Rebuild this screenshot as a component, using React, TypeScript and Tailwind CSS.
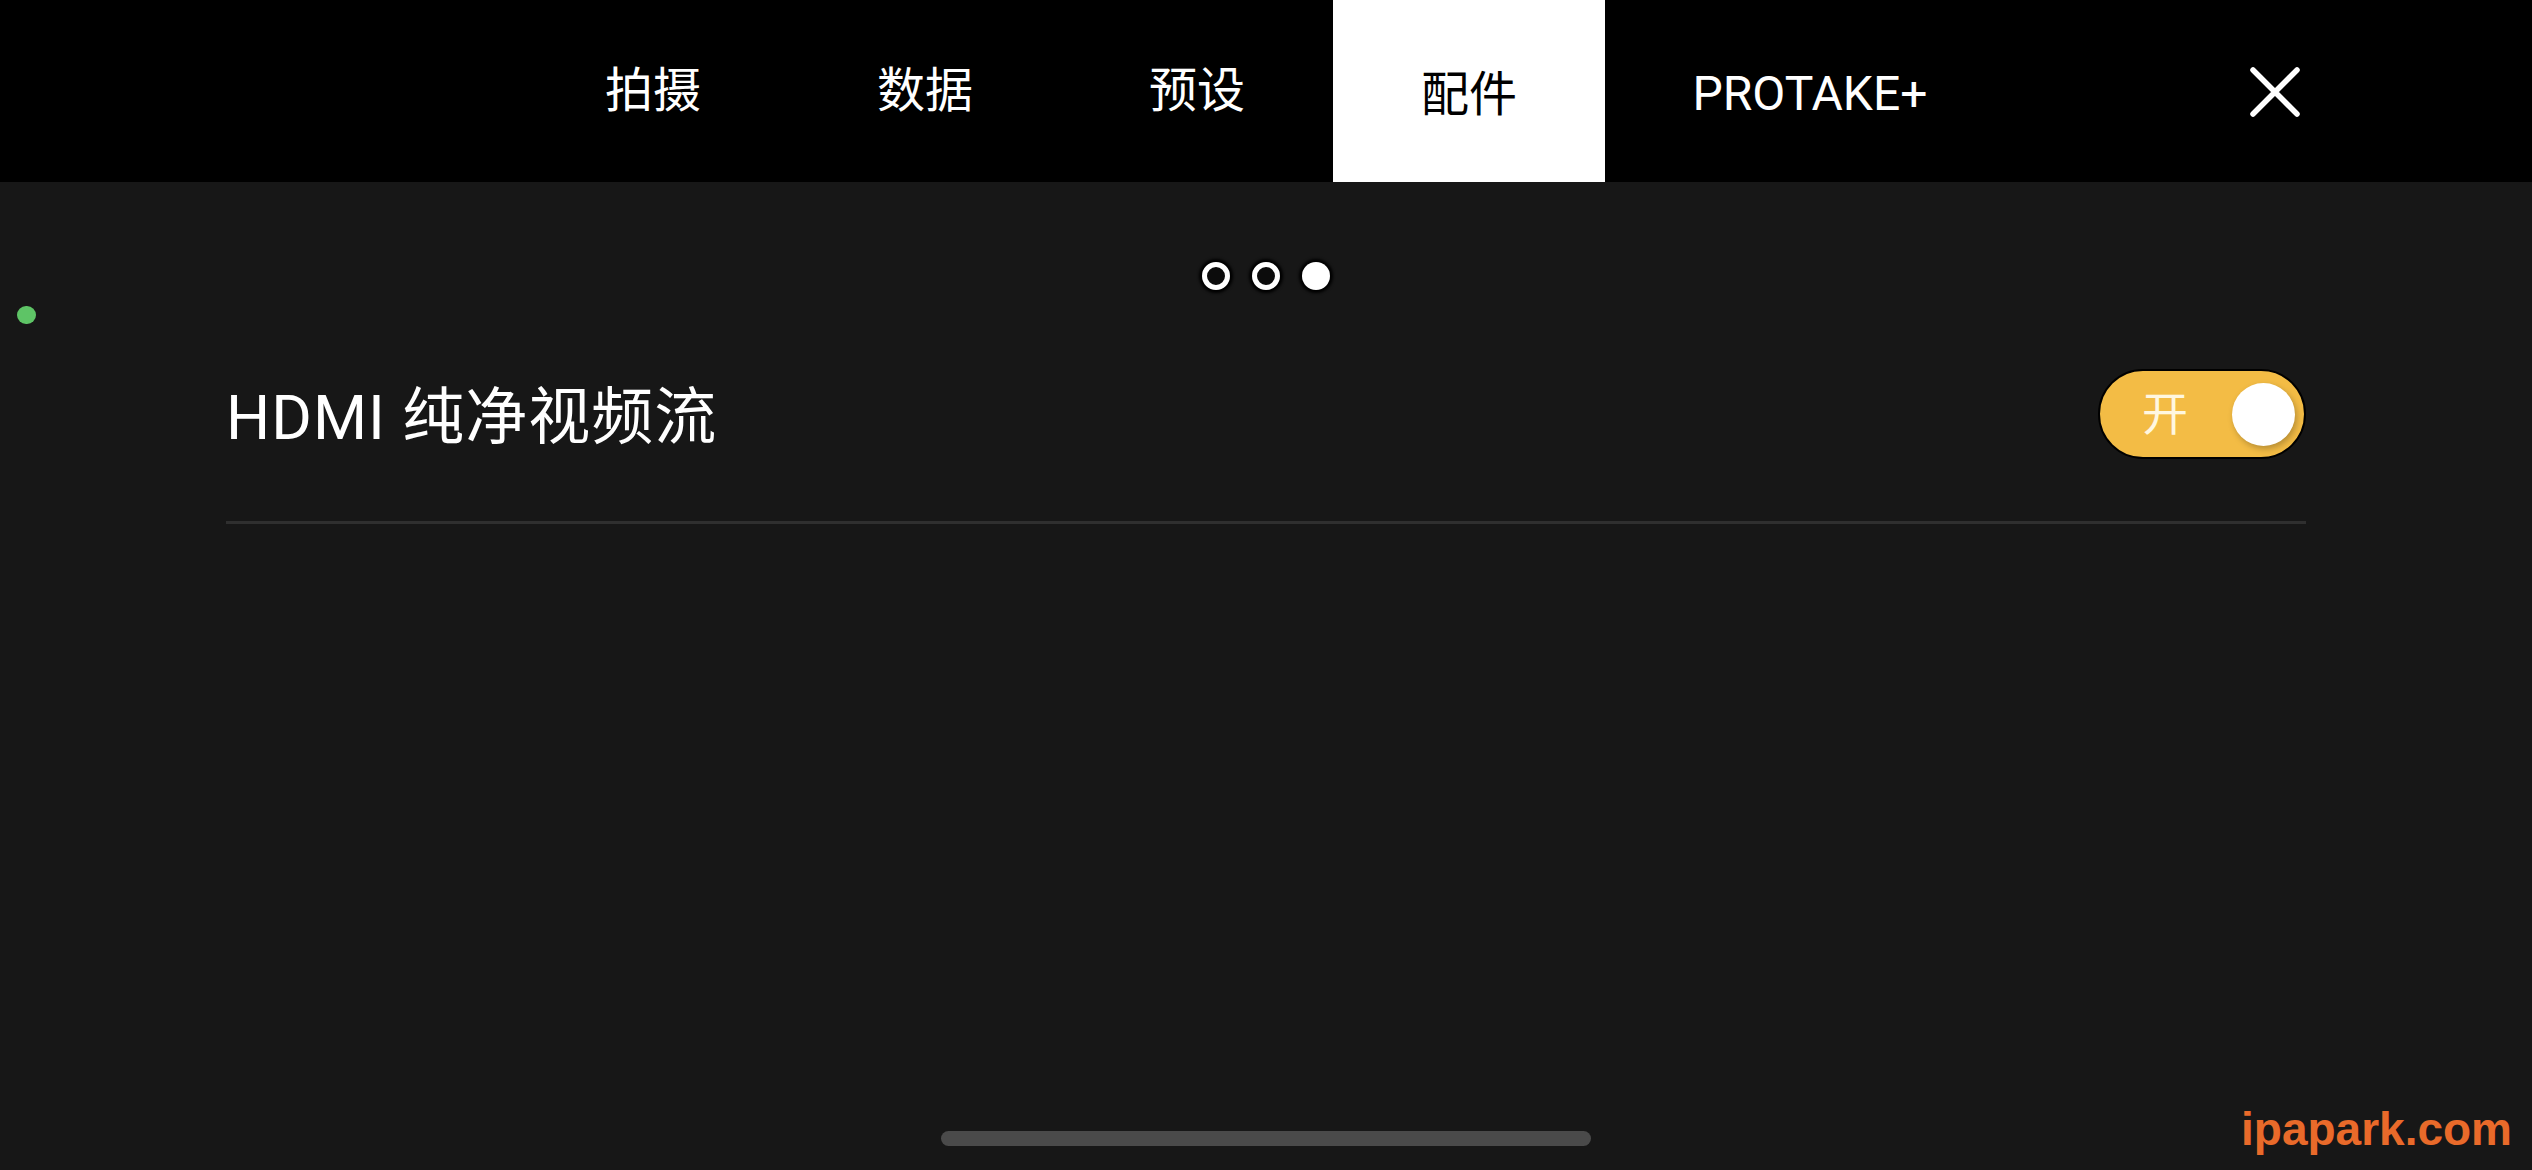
import React from 'react';

const tabs = ['拍摄', '数据', '预设', '配件'];
const active = '配件';

function CloseIcon() {
    return (
        <svg width="50" height="50" viewBox="0 0 50 50" fill="none">
            <path d="M3 3 L47 47 M47 3 L3 47" stroke="#fff" strokeWidth="5.5" strokeLinecap="round" />
        </svg>
    );
}

function Dot({ filled }: { filled?: boolean }) {
    return (
        <div
            className={
                filled
                    ? 'w-[28px] h-[28px] rounded-full bg-white shadow-[0_0_3px_3px_#000]'
                    : 'w-[28px] h-[28px] rounded-full border-[5px] border-white bg-[#0c0c0c] shadow-[0_0_3px_3px_#000]'
            }
        />
    );
}

export default function App() {
    return (
        <div className="relative w-[2532px] h-[1170px] bg-[#171717] overflow-hidden flex flex-col font-['Roboto','Noto_Sans_CJK_SC',sans-serif]">
            {/* top tab bar */}
            <div className="h-[182px] bg-black flex items-stretch pl-[517px] pr-[232px] shrink-0">
                {tabs.map((t) => (
                    <div
                        key={t}
                        className={
                            t === active
                                ? 'w-[272px] bg-white text-black flex items-center justify-center text-[48px] leading-none pt-[8px]'
                                : 'w-[272px] text-white flex items-center justify-center text-[48px] leading-none'
                        }
                    >
                        {t}
                    </div>
                ))}
                <div className="w-[410px] flex items-center justify-center text-white text-[48px] leading-none pt-[6px]">
                    PROTAKE+
                </div>
                <div className="flex-1" />
                <div className="flex items-center pt-[2px]">
                    <CloseIcon />
                </div>
            </div>

            {/* page dots */}
            <div className="flex justify-center gap-[22px] mt-[80px]">
                <Dot />
                <Dot />
                <Dot filled />
            </div>

            {/* setting row */}
            <div className="ml-[226px] w-[2080px] mt-[80px]">
                <div className="flex items-center h-[88px]">
                    <span className="text-white text-[62px] leading-none pt-[8px] tracking-[1px]">HDMI 纯净视频流</span>
                    <div className="ml-auto w-[208px] h-[90px] rounded-full border-2 border-black bg-[#f3bc45] flex items-center pl-[42px] pr-[9px]">
                        <span className="text-[#fff7e0] text-[46px] leading-none">开</span>
                        <div className="ml-auto w-[63px] h-[63px] rounded-full bg-white shadow-[2px_3px_6px_rgba(0,0,0,0.25)]" />
                    </div>
                </div>
                <div className="h-[3px] bg-[#2f2f2f] mt-[63px]" />
            </div>

            <div className="flex-1" />

            {/* home indicator */}
            <div className="flex justify-center mb-[24px]">
                <div className="w-[650px] h-[15px] rounded-full bg-[#4a4a4a]" />
            </div>

            {/* camera-in-use indicator */}
            <div className="absolute left-[17px] top-[306px] w-[19px] h-[18px] rounded-full bg-[#5ec466]" />

            {/* watermark */}
            <div className="absolute right-[20px] bottom-[18px] text-[#e96a2a] text-[46px] leading-none font-bold font-['Liberation_Sans',sans-serif]">
                ipapark.com
            </div>
        </div>
    );
}
